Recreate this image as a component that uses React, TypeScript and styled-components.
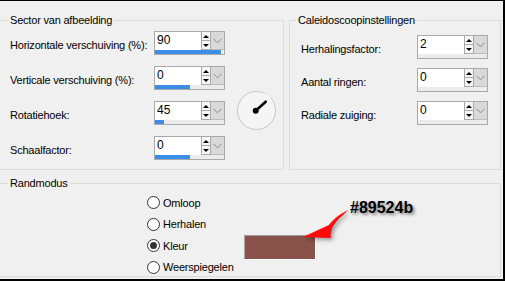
import React from "react";
import styled, { createGlobalStyle } from "styled-components";

const Global = createGlobalStyle`
  html, body { margin: 0; padding: 0; background: #f0f0f0; }
  body {
    font-family: "Liberation Sans", Arial, sans-serif;
    font-size: 11px;
    letter-spacing: -0.2px;
    color: #000;
  }
  * { box-sizing: border-box; }
`;

const Frame = styled.div`
  position: relative;
  width: 505px;
  height: 281px;
  overflow: hidden;
  border-top: 1px solid #000;
  border-right: 2px solid #000;
  border-bottom: 2px solid #000;
  padding: 12px 2px 0 0;
  display: flex;
  flex-direction: column;
  gap: 6px;
`;

const TopRow = styled.div`
  display: flex;
  gap: 5px;
`;

const Group = styled.fieldset<{ $w: number; $h: number; $noLeft?: boolean }>`
  margin: 0;
  padding: 0;
  min-width: 0;
  width: ${(p) => p.$w}px;
  height: ${(p) => p.$h}px;
  border: 1px solid #dcdcdc;
  ${(p) => (p.$noLeft ? "border-left: none;" : "")}
`;

const Legend = styled.legend<{ $x: number }>`
  margin-left: ${(p) => p.$x}px;
  padding: 0 2px;
  line-height: 14px;
`;

const SectorBody = styled.div`
  display: flex;
  padding: 4px 0 0 10px;
`;

const FormColumn = styled.div<{ $gap: number }>`
  display: flex;
  flex-direction: column;
  gap: ${(p) => p.$gap}px;
`;

const FieldRow = styled.div<{ $label: number }>`
  display: grid;
  grid-template-columns: ${(p) => p.$label}px 71px;
  align-items: center;
  height: 24px;
`;

const Label = styled.span`
  padding-top: 3px;
  white-space: nowrap;
`;

const Spin = styled.div`
  width: 71px;
  height: 24px;
  border: 1px solid #a9a9a9;
  background: #fff;
  display: flex;
  flex-direction: column;
`;

const SpinTop = styled.div`
  display: flex;
  height: 18px;
`;

const SpinValue = styled.div`
  flex: 1;
  padding: 1px 0 0 2px;
  font-size: 12px;
  letter-spacing: 0;
  line-height: 14px;
`;

const Stepper = styled.div`
  width: 10px;
  display: flex;
  flex-direction: column;
  border: 1px solid #a9a9a9;
  border-top: none;
`;

const StepBtn = styled.div<{ $down?: boolean }>`
  flex: 1;
  display: flex;
  align-items: center;
  justify-content: center;
  background: #f6f6f6;
  ${(p) => (p.$down ? "border-top: 1px solid #a9a9a9;" : "")}
  &::after {
    content: "";
    width: 0;
    height: 0;
    border-left: 3px solid transparent;
    border-right: 3px solid transparent;
    ${(p) => (p.$down ? "border-top: 3px solid #000;" : "border-bottom: 3px solid #000;")}
  }
`;

const DropBtn = styled.div`
  width: 13px;
  background: #d9d9d9;
  border-bottom: 1px solid #bdbdbd;
  display: flex;
  align-items: center;
  justify-content: center;
`;

const BarTrack = styled.div`
  height: 4px;
  background: #ececec;
`;

const BarFill = styled.div`
  height: 100%;
  background: #3a8ee8;
`;

const Chevron = () => (
  <svg width="9" height="6" viewBox="0 0 9 6">
    <path d="M0.5 0.8 L4.5 4.8 L8.5 0.8" fill="none" stroke="#8a8a8a" strokeWidth="1" />
  </svg>
);

const SpinBox = ({ value, fraction }: { value: string; fraction: number }) => (
  <Spin>
    <SpinTop>
      <SpinValue>{value}</SpinValue>
      <Stepper>
        <StepBtn />
        <StepBtn $down />
      </Stepper>
      <DropBtn>
        <Chevron />
      </DropBtn>
    </SpinTop>
    <BarTrack>
      <BarFill style={{ width: `${fraction * 100}%` }} />
    </BarTrack>
  </Spin>
);

const DialWrap = styled.div`
  margin: 60px 0 0 12px;
  width: 40px;
  height: 40px;
`;

const Dial = () => (
  <DialWrap>
    <svg width="40" height="40" viewBox="0 0 40 40">
      <circle cx="19.5" cy="19.5" r="19" fill="#f5f5f5" stroke="#c6c6c6" strokeWidth="1" />
      <path d="M26 2.8 A19 19 0 0 1 33 7" fill="none" stroke="#f5f5f5" strokeWidth="2" />
      <line x1="18.7" y1="19.7" x2="28.7" y2="10.7" stroke="#000" strokeWidth="2.6" strokeLinecap="round" />
      <circle cx="18.7" cy="19.7" r="3" fill="#000" />
    </svg>
  </DialWrap>
);

const KaleidoBody = styled.div`
  padding: 8px 0 0 11px;
`;

const RandBody = styled.div`
  display: grid;
  grid-template-columns: 97px 72px;
  grid-auto-rows: 21.5px;
  padding: 2px 0 0 147px;
`;

const RadioItem = styled.div`
  grid-column: 1;
  display: flex;
  align-items: center;
  gap: 3px;
  white-space: nowrap;
`;

const RadioDot = styled.span<{ $on?: boolean }>`
  width: 13px;
  height: 13px;
  border-radius: 50%;
  border: 1px solid #333;
  background: #fff;
  display: flex;
  align-items: center;
  justify-content: center;
  flex: none;
  &::after {
    content: "";
    width: 7px;
    height: 7px;
    border-radius: 50%;
    background: ${(p) => (p.$on ? "#333" : "transparent")};
  }
`;

const Swatch = styled.div<{ $color: string }>`
  grid-column: 2;
  grid-row: 3;
  align-self: start;
  width: 72px;
  height: 25px;
  background: ${(p) => p.$color};
  border-top: 1px solid #9a9a9a;
  border-left: 1px solid #a8a8a8;
  border-right: 1px solid #fff;
  border-bottom: 1px solid #fff;
`;

const Note = styled.div`
  position: absolute;
  left: 350px;
  top: 198px;
  font-weight: bold;
  font-size: 16px;
  letter-spacing: 0;
  line-height: 18px;
  color: #000;
  text-shadow: 2px 2px 3px rgba(0, 0, 0, 0.45);
`;

const Arrow = styled.svg`
  position: absolute;
  left: 300px;
  top: 204px;
  overflow: visible;
  filter: drop-shadow(2px 2px 2px rgba(0, 0, 0, 0.4));
`;

const sector = [
  { label: "Horizontale verschuiving (%):", value: "90", f: 0.95 },
  { label: "Verticale verschuiving (%):", value: "0", f: 0.5 },
  { label: "Rotatiehoek:", value: "45", f: 0.125 },
  { label: "Schaalfactor:", value: "0", f: 0.5 },
];

const kaleido = [
  { label: "Herhalingsfactor:", value: "2", f: 0 },
  { label: "Aantal ringen:", value: "0", f: 0 },
  { label: "Radiale zuiging:", value: "0", f: 0 },
];

const modes = [
  { label: "Omloop", on: false },
  { label: "Herhalen", on: false },
  { label: "Kleur", on: true },
  { label: "Weerspiegelen", on: false },
];

export default function App() {
  return (
    <>
      <Global />
      <Frame>
        <TopRow>
          <Group $w={284} $h={157} $noLeft>
            <Legend $x={8}>Sector van afbeelding</Legend>
            <SectorBody>
              <FormColumn $gap={11}>
                {sector.map((r) => (
                  <FieldRow key={r.label} $label={144}>
                    <Label>{r.label}</Label>
                    <SpinBox value={r.value} fraction={r.f} />
                  </FieldRow>
                ))}
              </FormColumn>
              <Dial />
            </SectorBody>
          </Group>
          <Group $w={212} $h={157}>
            <Legend $x={6}>Caleidoscoopinstellingen</Legend>
            <KaleidoBody>
              <FormColumn $gap={9}>
                {kaleido.map((r) => (
                  <FieldRow key={r.label} $label={116}>
                    <Label>{r.label}</Label>
                    <SpinBox value={r.value} fraction={r.f} />
                  </FieldRow>
                ))}
              </FormColumn>
            </KaleidoBody>
          </Group>
        </TopRow>
        <Group $w={501} $h={101} $noLeft>
          <Legend $x={8}>Randmodus</Legend>
          <RandBody>
            {modes.map((m) => (
              <RadioItem key={m.label}>
                <RadioDot $on={m.on} />
                {m.label}
              </RadioItem>
            ))}
            <Swatch $color="#89524b" />
          </RandBody>
        </Group>
        <Arrow width="52" height="38" viewBox="0 0 52 38">
          <path
            d="M48 5 C42 8 34 13 29 20 L3 32 L31 33 C30 27 32 22 36 17 C40 12 45 9 48 5 Z"
            fill="#ff0a0a"
          />
        </Arrow>
        <Note>#89524b</Note>
      </Frame>
    </>
  );
}
